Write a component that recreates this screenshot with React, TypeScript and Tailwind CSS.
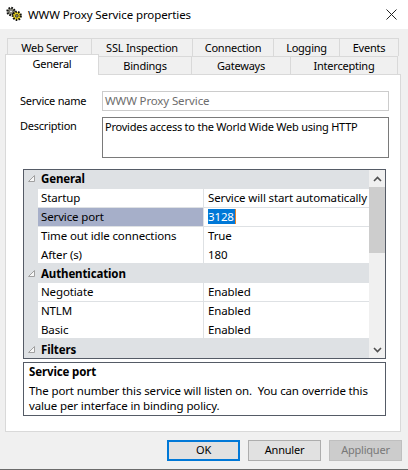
import React from "react";

function Tab({ w, label }: { w: string; label: string }) {
  return (
    <div className={`${w} h-full flex items-center justify-center bg-[#f0f0f0] border-t border-r border-[#d9d9d9] text-[11px] tracking-[-0.23px] pt-px`}>
      {label}
    </div>
  );
}

function Row({ name, value, selected = false, editing = false, low = false }: { name: string; value: string; selected?: boolean; editing?: boolean; low?: boolean }) {
  return (
    <div className="flex h-[19px] pl-[14px] bg-[#dee1e4]">
      <div className={`w-[165px] h-[18px] pl-[3px] flex items-center ${low ? "pt-px" : ""} ${selected ? "bg-[#a6afc9]" : "bg-white"}`}>{name}</div>
      <div className={`flex-1 h-[18px] ml-[1px] pl-[4px] flex items-center ${low ? "pt-px" : ""} bg-white whitespace-nowrap overflow-hidden`}>
        {editing ? <span className="bg-[#0078d7] text-white leading-[15px] border-r border-[#e8832a] pr-px">{value}</span> : value}
      </div>
    </div>
  );
}

function Header({ label, nudge = "" }: { label: string; nudge?: string }) {
  return (
    <div className={`flex h-[19px] items-center bg-[#dee1e4] ${nudge}`}>
      <div className="w-[14px] flex justify-center">
        <svg width="9" height="9" viewBox="0 0 9 9">
          <path d="M7.5 1.5 V7.5 H1.5 Z" fill="#f6f6f6" stroke="#a0a0a0" />
        </svg>
      </div>
      <div className="pl-[3px] font-bold">{label}</div>
    </div>
  );
}

export default function App() {
  return (
    <div className="w-[408px] h-[470px] bg-[#f0f0f0] flex flex-col text-[11.5px] tracking-[-0.13px] text-black overflow-hidden font-['Noto_Sans','Open_Sans',sans-serif]">
      <div className="h-[29px] bg-white flex items-center pl-[6px] pr-[10px] shrink-0">
        <svg width="17" height="17" viewBox="0 0 17 17" className="shrink-0 -mt-[1px]">
          <circle cx="5" cy="5.5" r="3.6" fill="#9a9a8a" stroke="#111" strokeWidth="2.2" strokeDasharray="1.6 1.2" />
          <circle cx="5" cy="5.5" r="1.5" fill="#e8e8e0" stroke="#333" strokeWidth="0.6" />
          <circle cx="10.8" cy="9.8" r="4" fill="#f0d820" stroke="#111" strokeWidth="2.2" strokeDasharray="1.6 1.2" />
          <circle cx="10.8" cy="9.8" r="1.5" fill="#808060" stroke="#222" strokeWidth="0.7" />
        </svg>
        <span className="ml-[5px] flex-1 tracking-[-0.09px]">WWW Proxy Service properties</span>
        <svg width="11" height="11" viewBox="0 0 11 11" className="mr-[1px]">
          <path d="M0.5 0.5 L10.5 10.5 M10.5 0.5 L0.5 10.5" stroke="#222" strokeWidth="1" fill="none" />
        </svg>
      </div>

      <div className="h-[9px] shrink-0" />

      <div className="flex h-[18px] ml-[7px] shrink-0 border-l border-[#d9d9d9] w-[392px]">
        <Tab w="w-[84px]" label="Web Server" />
        <Tab w="w-[101px]" label="SSL Inspection" />
        <Tab w="w-[81px]" label="Connection" />
        <Tab w="w-[66px]" label="Logging" />
        <Tab w="w-[59px]" label="Events" />
      </div>

      <div className="flex h-[18px] ml-[5px] shrink-0 relative z-10 text-[11px] tracking-[-0.23px]">
        <div className="w-[94px] h-[21px] -mt-[2px] bg-white border-t border-x border-[#d9d9d9] flex items-start justify-center pt-px">General</div>
        <div className="w-[93px] h-full flex items-center justify-center border-t border-r border-[#d9d9d9] pt-px">Bindings</div>
        <div className="w-[99px] h-full flex items-center justify-center border-t border-r border-[#d9d9d9] pt-px">Gateways</div>
        <div className="w-[107px] h-full flex items-center justify-center border-t border-r border-[#d9d9d9] pt-px">Intercepting</div>
      </div>

      <div className="ml-[5px] w-[396px] h-[358px] bg-white border border-[#d9d9d9] shrink-0 flex flex-col pt-[16px] pl-[14px]">
        <div className="flex h-[20px]">
          <div className="w-[82px] flex items-center text-[11px] tracking-[-0.23px]">Service name</div>
          <div className="w-[287px] h-[20px] border border-[#cccccc] pl-[2px] flex items-center text-[#6d6d6d]">WWW Proxy Service</div>
        </div>
        <div className="flex h-[41px] mt-[6px] text-[11px] tracking-[-0.23px]">
          <div className="w-[82px] pt-[1px]">Description</div>
          <div className="w-[287px] h-[41px] border border-[#7a7a7a] pl-[2px] pt-[1px]">Provides access to the World Wide Web using HTTP</div>
        </div>

        <div className="ml-[3px] mt-[11px] w-[363px] h-[190px] border border-[#555b66] flex">
          <div className="w-[345px] flex flex-col overflow-hidden">
            <Header label="General" nudge="pb-[2px]" />
            <Row name="Startup" value="Service will start automatically" />
            <Row name="Service port" value="3128" selected editing />
            <Row name="Time out idle connections" value="True" />
            <Row name="After (s)" value="180" />
            <Header label="Authentication" />
            <Row name="Negotiate" value="Enabled" />
            <Row name="NTLM" value="Enabled" low />
            <Row name="Basic" value="Enabled" low />
            <Header label="Filters" nudge="pt-[2px]" />
          </div>
          <div className="flex-1 bg-[#f0f0f0] flex flex-col items-center">
            <div className="h-[17px] flex items-center justify-center">
              <svg width="9" height="6" viewBox="0 0 9 6"><path d="M1 5 L4.5 1.5 L8 5" stroke="#505050" strokeWidth="1.6" fill="none" /></svg>
            </div>
            <div className="w-full h-[66px] bg-[#cdcdcd]" />
            <div className="flex-1" />
            <div className="h-[17px] flex items-center justify-center">
              <svg width="9" height="6" viewBox="0 0 9 6"><path d="M1 1 L4.5 4.5 L8 1" stroke="#505050" strokeWidth="1.6" fill="none" /></svg>
            </div>
          </div>
        </div>

        <div className="ml-[3px] mt-[3px] w-[363px] h-[54px] border border-[#555b66] pl-[5px] pt-[1px] leading-[15px]">
          <div className="font-bold mb-[4px]">Service port</div>
          <div className="whitespace-nowrap">The port number this service will listen on.&nbsp; You can override this</div>
          <div>value per interface in binding policy.</div>
        </div>
      </div>

      <div className="flex justify-end gap-2 pr-[6px] mt-[8px] shrink-0 text-[11px] tracking-[-0.23px]">
        <div className="w-[73px] h-[21px] bg-[#e1e1e1] border-2 border-[#0078d7] flex items-center justify-center">OK</div>
        <div className="w-[73px] h-[21px] bg-[#e1e1e1] border border-[#adadad] flex items-center justify-center">Annuler</div>
        <div className="w-[73px] h-[21px] bg-[#cccccc] border border-[#bfbfbf] flex items-center justify-center text-[#787878]">Appliquer</div>
      </div>
      <div className="flex-1" />
      <div className="h-px bg-[#6b6b6b] shrink-0" />
    </div>
  );
}
